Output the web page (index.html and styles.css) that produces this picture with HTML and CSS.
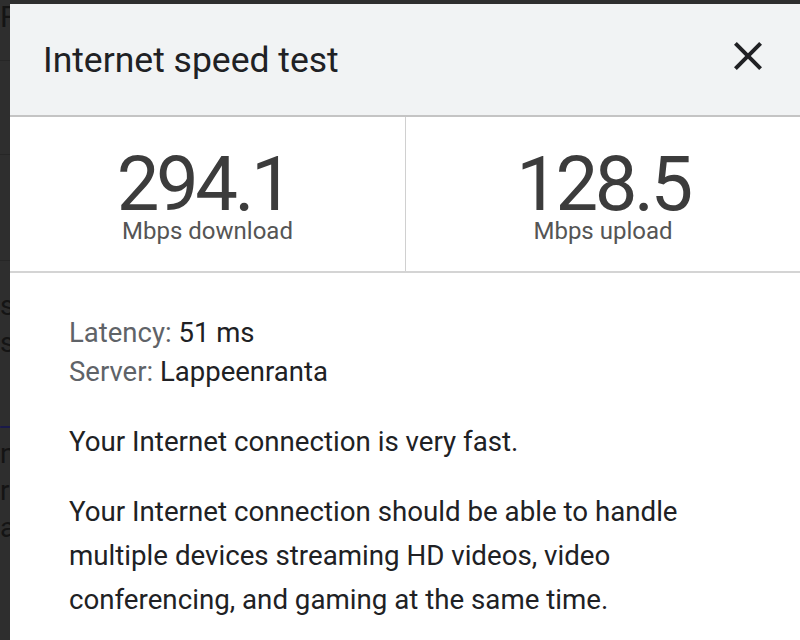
FILE: index.html
```html
<!DOCTYPE html>
<html lang="en">
<head>
<meta charset="utf-8">
<title>Internet speed test</title>
<link rel="stylesheet" href="styles.css">
</head>
<body>
<div class="page-edge" aria-hidden="true">
  <div class="edge-top">F</div>
  <div class="edge-rule r1"></div>
  <div class="edge-rule r2"></div>
  <div class="edge-rule r3"></div>
  <div class="edge-lines">
    <div>sp</div>
    <div>s.</div>
    <div>&nbsp;</div>
    <div class="edge-link">__</div>
    <div>n</div>
    <div>rr</div>
    <div>an</div>
  </div>
</div>
<div class="dialog" role="dialog" aria-labelledby="dlg-title">
  <header class="dialog-header">
    <h1 id="dlg-title" class="dialog-title">Internet speed test</h1>
    <button class="close-btn" aria-label="Close">
      <svg class="close-icon" viewBox="0 0 24 24" width="48" height="48"><path d="M19 6.41L17.59 5 12 10.59 6.41 5 5 6.41 10.59 12 5 17.59 6.41 19 12 13.41 17.59 19 19 17.59 13.41 12z"/></svg>
    </button>
  </header>
  <div class="stats">
    <div class="stat stat-down">
      <div class="stat-value">294.1</div>
      <div class="stat-label">Mbps download</div>
    </div>
    <div class="stat">
      <div class="stat-value">128.5</div>
      <div class="stat-label">Mbps upload</div>
    </div>
  </div>
  <div class="dialog-body">
    <div class="meta">
      <div><span class="meta-key">Latency:</span> <span class="meta-val">51 ms</span></div>
      <div><span class="meta-key">Server:</span> <span class="meta-val">Lappeenranta</span></div>
    </div>
    <p class="para first">Your Internet connection is very fast.</p>
    <p class="para">Your Internet connection should be able to handle multiple devices streaming HD videos, video conferencing, and gaming at the same time.</p>
  </div>
</div>
</body>
</html>
```

FILE: styles.css
```css
* { box-sizing: border-box; }
html, body { margin: 0; padding: 0; }
body {
  width: 800px;
  height: 640px;
  overflow: hidden;
  display: flex;
  background: #2e2e2e;
  font-family: Roboto, "Liberation Sans", sans-serif;
}
.page-edge {
  flex: none;
  width: 10px;
  overflow: hidden;
  color: #141414;
  font-size: 28px;
}
.edge-top {
  font-size: 30px;
  line-height: 30px;
  margin-top: 2px;
}
.edge-rule {
  height: 1px;
  background: #262626;
}
.r1 { margin-top: 28px; }
.r2 { margin-top: 93px; }
.r3 { margin-top: 105px; }
.edge-lines {
  margin-top: 26px;
  line-height: 37px;
  white-space: nowrap;
}
.edge-link { color: #1a1a4a; }
.dialog {
  flex: none;
  width: 790px;
  margin-top: 4px;
  background: #fff;
  display: flex;
  flex-direction: column;
}
.dialog-header {
  height: 113px;
  background: #f1f3f4;
  border-bottom: 2px solid #c4c4c4;
  display: flex;
  align-items: center;
  justify-content: space-between;
  padding: 0 28px 0 33px;
}
.dialog-title {
  margin: 0;
  font-size: 35.5px;
  font-weight: 400;
  color: #202124;
}
.close-btn {
  border: 0;
  background: none;
  padding: 0;
  margin-bottom: 7px;
  display: flex;
}
.close-icon { fill: #202124; display: block; }
.stats {
  display: grid;
  grid-template-columns: 1fr 1fr;
  border-bottom: 2px solid #d4d4d4;
}
.stat {
  text-align: center;
  padding: 34px 0 26px;
}
.stat + .stat { border-left: 1px solid #d0d0d0; }
.stat-down .stat-value { padding-right: 8px; }
.stat-value {
  font-size: 76px;
  line-height: 66px;
  letter-spacing: -3.5px;
  color: #3c3c3c;
}
.stat-label {
  font-size: 24px;
  line-height: 28px;
  color: #555;
}
.dialog-body {
  padding: 40px 30px 0 59px;
}
.meta {
  font-size: 27.5px;
  line-height: 39px;
}
.meta-key { color: #5f6368; }
.meta-val { color: #202124; }
.para {
  margin: 26px 0 0;
  font-size: 27.7px;
  line-height: 44px;
  color: #202124;
}
.para.first { margin-top: 29px; }
```
